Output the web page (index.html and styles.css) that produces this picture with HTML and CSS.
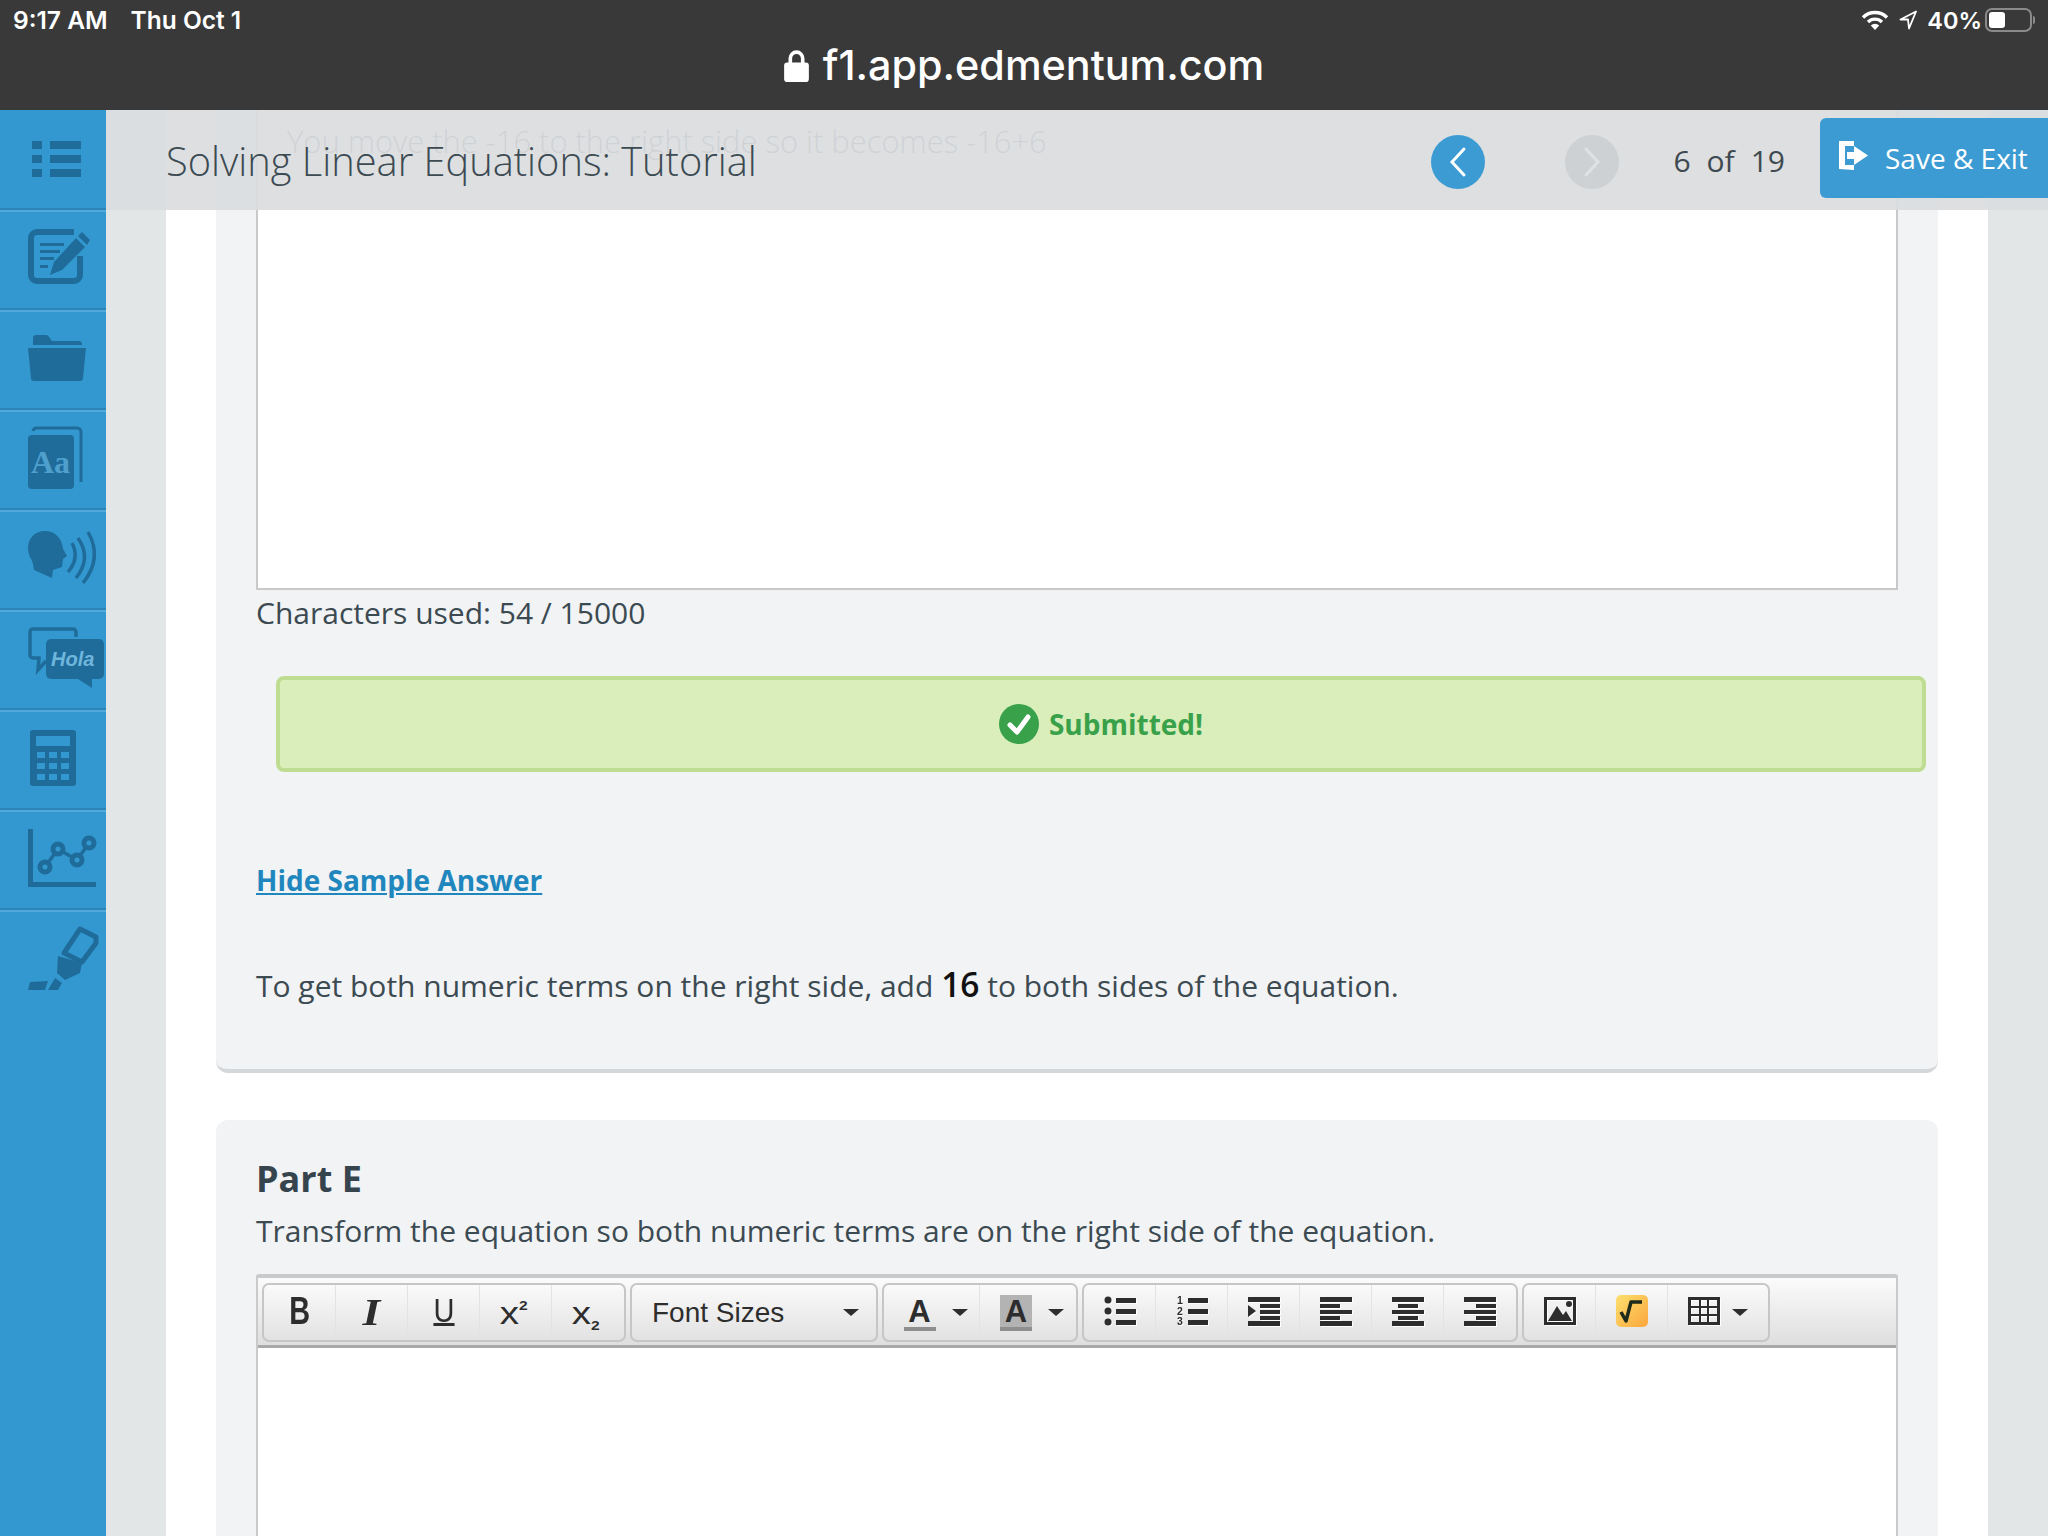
FILE: index.html
```html
<!DOCTYPE html>
<html lang="en">
<head>
<meta charset="utf-8">
<title>Solving Linear Equations: Tutorial</title>
<link rel="stylesheet" href="styles.css">
</head>
<body>
<div class="browser">
  <div class="status-row">
    <div class="status-left"><span>9:17 AM</span><span>Thu Oct 1</span></div>
    <div class="status-right">
      <svg class="wifi" viewBox="0 0 28 20"><path d="M2 7.500a17 17 0 0 1 24 0" class="wifi-arc"/><path d="M7 12a10 10 0 0 1 14 0" class="wifi-arc"/><path d="M14 20l-4.200-4.500a6 6 0 0 1 8.400 0z" class="wifi-dot"/></svg>
      <svg class="loc" viewBox="0 0 18 20"><path d="M17 1.500L1.500 9.500h7.500l1 9z" class="loc-line"/></svg>
      <span class="pct">40%</span>
      <div class="battery"><div class="battery-fill"></div></div>
      <div class="battery-nub"></div>
    </div>
  </div>
  <div class="url-row">
    <svg class="lock" viewBox="0 0 24 32"><path d="M6 14V9a6 6 0 0 1 12 0v5" class="lock-arc"/><rect x="0" y="13" width="24" height="19" rx="3" class="lock-body"/></svg>
    <span>f1.app.edmentum.com</span>
  </div>
</div>

<div class="app">
  <nav class="sidebar">
    <div class="side-item"><svg class="side-icon" viewBox="0 0 80 80"><path d="M8 21h10v8H8zM26 21h31v8H26zM8 35h10v8H8zM26 35h31v8H26zM8 49h10v8H8zM26 49h31v8H26z"/></svg></div>
    <div class="side-item"><svg class="side-icon" viewBox="0 0 80 80"><path class="ol" stroke-width="6" d="M50 12H13a6 6 0 0 0-6 6V55a6 6 0 0 0 6 6H50a6 6 0 0 0 6-6V36"/><path d="M16 23h24v3H16zM16 30h20v3H16zM16 37h14v3H16zM16 45h8v3H16z"/><path d="M26 55l4-13 22-24 9 9-23 23zM54 16l4-4 8 8-3 5z"/></svg></div>
    <div class="side-item"><svg class="side-icon" viewBox="0 0 80 80"><path d="M9 25V18a3 3 0 0 1 3-3H22a3 3 0 0 1 3 2l3 4H55a3 3 0 0 1 3 3V25zM4 28H62L59 58a3 3 0 0 1-3 3H10a3 3 0 0 1-3-3z"/></svg></div>
    <div class="side-item"><svg class="side-icon" viewBox="0 0 80 80"><path class="ol" stroke-width="3" d="M9 11a4 4 0 0 1 4-3H53a4 4 0 0 1 4 4V62"/><rect x="4" y="15" width="46" height="54" rx="4"/><text x="7" y="53" class="aa">Aa</text></svg></div>
    <div class="side-item"><svg class="side-icon" viewBox="0 0 80 80"><path d="M21 11C10 11 4 19 4 28C4 36 8 39 9 44L10 50L28 58L29 50L38 47L39 39L43 36L39 29C38 18 31 11 21 11Z"/><path class="ol" stroke-width="3.500" d="M48 23Q56 38 44 52M54 18Q68 38 52 58M64 12Q79 38 59 63"/></svg></div>
    <div class="side-item"><svg class="side-icon" viewBox="0 0 80 80"><path class="ol" stroke-width="3.500" d="M52 17V12a3 3 0 0 0-3-3H9a3 3 0 0 0-3 3V35a3 3 0 0 0 3 3h6l-1 12 8-9"/><rect x="22" y="19" width="58" height="40" rx="5"/><path d="M54 59H68V68z"/><text x="27" y="46" class="hola">Hola</text></svg></div>
    <div class="side-item"><svg class="side-icon" viewBox="0 0 80 80"><path fill-rule="evenodd" d="M9 10H49a3 3 0 0 1 3 3V63a3 3 0 0 1-3 3H9a3 3 0 0 1-3-3V13a3 3 0 0 1 3-3zM12 16v10H46V16zM13 32v6H21V32zM25 32v6H33V32zM37 32v6H45V32zM13 43v6H21V43zM25 43v6H33V43zM37 43v6H45V43zM13 54v6H21V54zM25 54v6H33V54zM37 54v6H45V54z"/></svg></div>
    <div class="side-item"><svg class="side-icon" viewBox="0 0 80 80"><path class="ol" stroke-width="5" d="M6.500 9V64.500H72"/><path class="ol" stroke-width="3.500" d="M21 47L34 29L53 40L65 23"/><circle cx="21" cy="47" r="5" class="dot"/><circle cx="34" cy="29" r="5" class="dot"/><circle cx="53" cy="40" r="5" class="dot"/><circle cx="65" cy="23" r="5" class="dot"/></svg></div>
    <div class="side-item"><svg class="side-icon" viewBox="0 0 80 80"><path class="ol" stroke-width="5" stroke-linejoin="round" d="M56 9L72 17V23L58 42L40 33Z"/><path d="M34 36L58 43L56 53L41 60L33 53zM31 58L38 63L34 70H24zM6 62L24 61L21 70H4z"/></svg></div>
  </nav>

  <main class="main">
    <div class="column">
      <section class="card card-first">
        <div class="answer-box"><p class="answer-text">You move the -16 to the right side so it becomes -16+6</p></div>
        <p class="chars">Characters used: 54 / 15000</p>
        <div class="submitted">
          <svg class="check" viewBox="0 0 40 40"><circle cx="20" cy="20" r="20" class="check-bg"/><path d="M11 21l7 7 11-15" class="check-mark"/></svg>
          <span>Submitted!</span>
        </div>
        <a class="sample-link">Hide Sample Answer</a>
        <p class="sample-text">To get both numeric terms on the right side, add <span class="num">16</span> to both sides of the equation.</p>
      </section>

      <section class="card card-second">
        <h2 class="part-title">Part E</h2>
        <p class="part-desc">Transform the equation so both numeric terms are on the right side of the equation.</p>
        <div class="editor">
          <div class="toolbar">
            <div class="tb-group">
              <div class="tb-btn w72"><span class="g-b">B</span></div>
              <div class="tb-btn w72"><span class="g-i">I</span></div>
              <div class="tb-btn w72"><span class="g-u">U</span></div>
              <div class="tb-btn w72"><span class="g-x">x<sup>2</sup></span></div>
              <div class="tb-btn w72 last"><span class="g-x">x<sub>2</sub></span></div>
            </div>
            <div class="tb-group fonts">
              <span class="fs-label">Font Sizes</span><span class="caret"></span>
            </div>
            <div class="tb-group">
              <div class="tb-btn w98"><span class="g-a">A</span><span class="caret"></span></div>
              <div class="tb-btn w98 last"><span class="g-a shade">A</span><span class="caret"></span></div>
            </div>
            <div class="tb-group">
              <div class="tb-btn w72"><svg class="tb-icon" viewBox="0 0 32 30"><circle cx="4" cy="4" r="3.500"/><circle cx="4" cy="15" r="3.500"/><circle cx="4" cy="26" r="3.500"/><path d="M12 2h20v5H12zM12 13h20v5H12zM12 24h20v5H12z"/></svg></div>
              <div class="tb-btn w72"><svg class="tb-icon" viewBox="0 0 32 30"><text x="1" y="8" class="mini">1</text><text x="1" y="19" class="mini">2</text><text x="1" y="29" class="mini">3</text><path d="M12 2h20v5H12zM12 13h20v5H12zM12 24h20v5H12z"/></svg></div>
              <div class="tb-btn w72"><svg class="tb-icon" viewBox="0 0 32 30"><path d="M0 1h32v5H0zM12 8h20v4H12zM12 14h20v4H12zM12 20h20v4H12zM0 25h32v5H0zM0 9l8 6-8 6z"/></svg></div>
              <div class="tb-btn w72"><svg class="tb-icon" viewBox="0 0 32 30"><path d="M0 1h32v5H0zM0 8h20v4H0zM0 14h32v4H0zM0 20h20v4H0zM0 25h32v5H0z"/></svg></div>
              <div class="tb-btn w72"><svg class="tb-icon" viewBox="0 0 32 30"><path d="M0 1h32v5H0zM6 8h20v4H6zM0 14h32v4H0zM6 20h20v4H6zM0 25h32v5H0z"/></svg></div>
              <div class="tb-btn w72 last"><svg class="tb-icon" viewBox="0 0 32 30"><path d="M0 1h32v5H0zM12 8h20v4H12zM0 14h32v4H0zM12 20h20v4H12zM0 25h32v5H0z"/></svg></div>
            </div>
            <div class="tb-group">
              <div class="tb-btn w72"><svg class="tb-icon" viewBox="0 0 32 28"><path fill-rule="evenodd" d="M0 0H32V28H0zM3 3V25H29V3z"/><path d="M4 24L13 9L19 18L22 14L28 24z"/><circle cx="25" cy="7" r="3"/></svg></div>
              <div class="tb-btn w72"><svg class="tb-sqrt" viewBox="0 0 32 32"><defs><linearGradient id="sq" x1="0" y1="0" x2="1" y2="1"><stop offset="0" stop-color="#fbe06e"/><stop offset="1" stop-color="#fba63c"/></linearGradient></defs><rect width="32" height="32" rx="5" fill="url(#sq)"/><path d="M5 17l5 9 5-19h11" class="sqrt-line"/></svg></div>
              <div class="tb-btn w102 last"><svg class="tb-icon" viewBox="0 0 32 28"><path fill-rule="evenodd" d="M0 0H32V28H0zM3 3V9H11V3zM13 3V9H19V3zM21 3V9H29V3zM3 11V17H11V11zM13 11V17H19V11zM21 11V17H29V11zM3 19V25H11V19zM13 19V25H19V19zM21 19V25H29V19z"/></svg><span class="caret"></span></div>
            </div>
          </div>
          <div class="editor-body"></div>
        </div>
      </section>
    </div>

    <header class="topbar">
      <h1 class="title">Solving Linear Equations: Tutorial</h1>
      <div class="nav">
        <div class="circle circle-prev"><svg class="chev" viewBox="0 0 20 32"><path d="M16 3L4 16l12 13"/></svg></div>
        <div class="circle circle-next"><svg class="chev" viewBox="0 0 20 32"><path d="M4 3l12 13L4 29"/></svg></div>
        <div class="count"><span>6</span><span>of</span><span>19</span></div>
        <div class="save">
          <svg class="save-icon" viewBox="0 0 29 29"><path d="M0 0H15V5H6V24H15V29L0 28z"/><path d="M8 11h7V5l14 9.500L15 24v-6H8z"/></svg>
          <span>Save &amp; Exit</span>
        </div>
      </div>
    </header>
  </main>
</div>
</body>
</html>
```
FILE: styles.css
```css
* { box-sizing: border-box; }
html, body { margin: 0; padding: 0; height: 100%; overflow: hidden; }
body { width: 2048px; height: 1536px; display: flex; flex-direction: column; font-family: "Open Sans", sans-serif; color: #3c4a52; background: #e3e6e7; }

/* browser chrome */
.browser { height: 110px; flex: none; background: #393939; color: #fff; font-family: Inter, sans-serif; }
.status-row { height: 40px; display: flex; justify-content: space-between; align-items: center; padding: 0 13px; }
.status-left { display: flex; gap: 23px; font-size: 24.500px; font-weight: 600; }
.status-right { display: flex; align-items: center; }
.wifi { width: 28px; height: 20px; margin-right: 10px; }
.wifi-arc { fill: none; stroke: #fff; stroke-width: 3.400; }
.wifi-dot { fill: #fff; }
.loc { width: 18px; height: 20px; margin-right: 10px; }
.loc-line { fill: none; stroke: #fff; stroke-width: 1.800; stroke-linejoin: round; }
.pct { font-size: 23.500px; font-weight: 600; margin-right: 3px; }
.battery { width: 47px; height: 24px; border: 2px solid #8a8a8a; border-radius: 7px; padding: 2px; }
.battery-fill { width: 16px; height: 100%; background: #fff; border-radius: 3px; }
.battery-nub { width: 2px; height: 8px; margin-left: 1px; background: #8a8a8a; border-radius: 0 2px 2px 0; }
.url-row { height: 50px; display: flex; align-items: center; justify-content: center; gap: 14px; font-size: 41.300px; font-weight: 500; }
.lock { width: 25px; height: 33px; }
.lock-arc { fill: none; stroke: #fff; stroke-width: 3.500; }
.lock-body { fill: #fff; }

/* app frame */
.app { flex: 1; min-height: 0; display: flex; }
.sidebar { width: 106px; flex: none; background: #3298cf; }
.side-item { height: 100px; padding: 10px 0 0 24px; box-shadow: 0 2px 0 #4fa9da; border-bottom: 2px solid #2a84b5; }
.side-item:last-child { box-shadow: none; border-bottom: none; }
.side-icon { width: 80px; height: 80px; display: block; fill: #1f6c9b; overflow: visible; }
.side-icon .ol { fill: none; stroke: #1f6c9b; }
.side-icon .dot { fill: #3298cf; stroke: #1f6c9b; stroke-width: 5; }
.aa { font-family: "Liberation Serif", serif; font-weight: 700; font-size: 32px; fill: #4f9fcc; }
.hola { font-family: "Liberation Sans", sans-serif; font-weight: 700; font-style: italic; font-size: 20px; fill: #6fb6dc; }

.main { flex: 1; min-width: 0; position: relative; padding: 0 60px; overflow: hidden; }
.column { background: #fff; height: 100%; padding: 0 50px; }
.card { background: #f1f3f4; padding: 0 40px; }
.card-first { height: 963px; border-bottom: 4px solid #d5d8da; border-radius: 0 0 12px 12px; }
.card-second { margin-top: 47px; height: 500px; padding-top: 37px; border-radius: 12px 12px 0 0; }

.answer-box { height: 480px; background: #fff; border: 2px solid #c9c9c9; border-top: none; padding: 11px 29px; }
.answer-text { margin: 0; font-size: 30.900px; font-weight: 300; line-height: 40px; color: #3c4a52; }
.chars { margin: 3px 0 0; font-size: 30px; line-height: 40px; }
.submitted { width: 1650px; height: 96px; margin: 43px 0 0 20px; background: #daeebb; border: 4px solid #bfdc93; border-radius: 8px; display: flex; align-items: center; justify-content: center; gap: 10px; color: #3aa14b; font-weight: 700; font-size: 28px; }
.check { width: 40px; height: 40px; }
.check-bg { fill: #3aa14b; }
.check-mark { fill: none; stroke: #fff; stroke-width: 5; stroke-linecap: round; stroke-linejoin: round; }
.sample-link { display: block; width: max-content; margin-top: 88px; font-size: 28px; line-height: 40px; font-weight: 700; color: #1f87bd; text-decoration: underline; }
.sample-text { margin: 63px 0 0; font-size: 30px; line-height: 42px; }
.num { font-size: 33.500px; font-weight: 600; color: #111; }

.part-title { margin: 0; font-size: 36px; line-height: 44px; font-weight: 700; color: #36444d; }
.part-desc { margin: 8px 0 0; font-size: 30px; line-height: 44px; }

.editor { margin-top: 21px; border: solid #c8cacb; border-width: 4px 2px 0; border-radius: 3px 3px 0 0; height: 400px; background: #fff; }
.toolbar { height: 70px; display: flex; gap: 4px; padding: 5px 0 0 4px; background: linear-gradient(#fbfbfb, #dedede); border-bottom: 3px solid #a9a9a9; }
.tb-group { height: 59px; display: flex; border: 2px solid #c6c6c6; border-radius: 7px; background: linear-gradient(#fafafa, #e2e2e2); color: #2d2d2d; }
.tb-btn { height: 100%; display: flex; align-items: center; justify-content: center; gap: 16px; border-right: 1px solid #e3e3e3; }
.tb-btn.last { border-right: none; }
.w72 { width: 72px; }
.w98 { width: 96px; padding-left: 8px; }
.w102 { width: 100px; gap: 12px; }
.tb-icon { width: 32px; height: 30px; margin-top: -3px; fill: #2d2d2d; overflow: visible; filter: drop-shadow(1px 1px 0 #fff); }
.tb-sqrt { width: 32px; height: 32px; margin-top: -3px; }
.sqrt-line { fill: none; stroke: #1f2a1a; stroke-width: 3.500; stroke-linejoin: round; }
.mini { font-family: "Liberation Sans", sans-serif; font-weight: 700; font-size: 10.500px; fill: #2d2d2d; }
.caret { width: 0; height: 0; border: solid transparent; border-width: 7px 8px 0; border-top-color: #2d2d2d; }
.g-b { font: 700 38px "Liberation Sans", sans-serif; transform: scaleX(.76); margin-top: -2px; }
.g-i { font: italic 700 38px "Liberation Serif", serif; transform: scaleX(1.2); margin-top: -2px; }
.g-u { font: 400 33px "Liberation Sans", sans-serif; line-height: 25px; border-bottom: 3px solid #2d2d2d; transform: scaleX(.88); margin-top: -2px; }
.g-x { display: block; height: 32px; font: 400 32px "Liberation Sans", sans-serif; line-height: 32px; transform: translateX(-2px) scaleX(1.2); }
.g-x sup, .g-x sub { font-size: 13px; font-weight: 700; line-height: 0; }
.g-x sup { vertical-align: 14px; }
.g-x sub { vertical-align: -6px; }
.g-a { font: 700 31px "Liberation Sans", sans-serif; width: 32px; height: 36px; line-height: 34px; text-align: center; border-bottom: 4px solid #8e8e8e; }
.g-a.shade { background: #b3b3b3; }
.fonts { width: 248px; align-items: center; justify-content: space-between; padding: 0 17px 0 20px; }
.fs-label { font: 400 28px "Liberation Sans", sans-serif; }
.editor-body { height: 300px; }

/* top bar over the scrolled content */
.topbar { position: absolute; top: 0; left: 0; right: 0; height: 100px; background: rgba(218, 221, 223, .93); display: flex; align-items: center; justify-content: space-between; padding-left: 60px; }
.title { margin: 0; font-size: 39.800px; font-weight: 300; color: #3c4a52; }
.nav { display: flex; align-items: center; }
.circle { width: 54px; height: 54px; border-radius: 50%; display: flex; align-items: center; justify-content: center; margin-top: 4px; }
.circle-prev { background: #3c9bd3; stroke: #fff; margin-right: 80px; }
.circle-next { background: #cdd1d3; stroke: #dfe2e3; margin-right: 54px; }
.chev { width: 20px; height: 32px; fill: none; stroke-width: 3; stroke-linecap: round; }
.count { display: flex; gap: 16px; font-size: 30px; margin-right: 35px; color: #3f4a50; }
.save { width: 228px; height: 80px; margin-top: -4px; background: #3c9bd3; border-radius: 6px 0 0 6px; color: #fff; display: flex; align-items: center; padding-left: 19px; gap: 17px; font-size: 28px; }
.save-icon { width: 29px; height: 29px; fill: #fff; margin-top: -6px; }
```
